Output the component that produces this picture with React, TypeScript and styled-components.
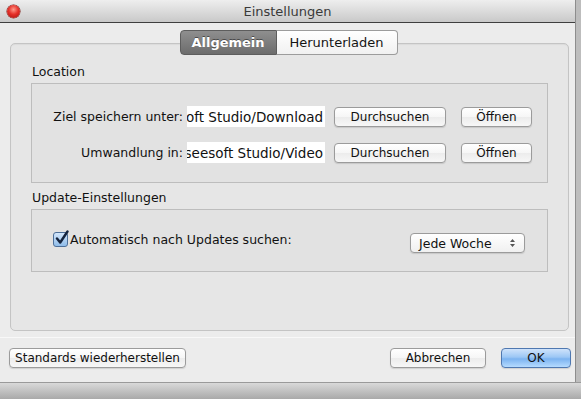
import React from 'react';
import styled, { createGlobalStyle } from 'styled-components';

const GlobalStyle = createGlobalStyle`
  html, body {
    margin: 0;
    padding: 0;
    background: #bdbdbd;
    font-family: "DejaVu Sans", "Liberation Sans", sans-serif;
    font-size: 12.5px;
    color: #111;
  }
`;

const Screen = styled.div`
  width: 581px;
  height: 399px;
  display: flex;
  flex-direction: column;
  overflow: hidden;
`;

const Window = styled.div`
  width: 576px;
  height: 383px;
  background: #ececec;
  border-right: 1px solid #8d8d8d;
  display: flex;
  flex-direction: column;
  box-sizing: border-box;
`;

const BottomStrip = styled.div`
  height: 16px;
  background: linear-gradient(#d9d9d9, #a9a9a9);
  border-top: 1px solid #9a9a9a;
`;

const TitleBar = styled.div`
  height: 22px;
  flex: none;
  background: linear-gradient(#eeeeee, #c9c9c9);
  border-bottom: 1px solid #3f3f3f;
  display: flex;
  align-items: center;
  position: relative;
  padding-left: 7px;
`;

const CloseDot = styled.div`
  width: 13px;
  height: 13px;
  border-radius: 50%;
  background: radial-gradient(circle at 50% 35%, #ff9a8a 0%, #e6312a 45%, #a50f0b 100%);
  box-shadow: 0 0 0 0.5px #7a1a14, 0 1px 1px rgba(255,255,255,0.6);
`;

const Title = styled.div`
  position: absolute;
  left: 0;
  right: 0;
  text-align: center;
  font-size: 13px;
  color: #3a3a3a;
  pointer-events: none;
`;

const Body = styled.div`
  flex: 1;
  display: flex;
  flex-direction: column;
  padding: 7px 6px 0 10px;
`;

const TabRow = styled.div`
  display: flex;
  justify-content: center;
  position: relative;
  z-index: 1;
  margin-bottom: -12px;
  padding-right: 2px;
`;

const Tab = styled.div<{ active?: boolean }>`
  height: 23px;
  display: flex;
  align-items: center;
  justify-content: center;
  font-size: 13px;
  border: 1px solid ${p => (p.active ? '#5d5d5d' : '#9c9c9c')};
  background: ${p => (p.active ? 'linear-gradient(#8f8f8f, #6c6c6c)' : 'linear-gradient(#ffffff, #f1f1f1)')};
  color: ${p => (p.active ? '#ffffff' : '#141414')};
  font-weight: ${p => (p.active ? 'bold' : 'normal')};
  text-shadow: ${p => (p.active ? '0 -1px 0 rgba(0,0,0,0.45)' : 'none')};
  &:first-child {
    border-radius: 4px 0 0 4px;
    width: 95px;
  }
  &:last-child {
    border-radius: 0 4px 4px 0;
    border-left: none;
    width: 120px;
  }
`;

const Panel = styled.div`
  height: 288px;
  box-sizing: border-box;
  border: 1px solid #c4c4c4;
  border-radius: 5px;
  background: #e6e6e6;
  box-shadow: inset 0 1px 1px rgba(0,0,0,0.05);
  padding: 20px 20px 0 20px;
  display: flex;
  flex-direction: column;
`;

const GroupTitle = styled.div`
  margin: 0 0 3px 1px;
  height: 16px;
  line-height: 16px;
`;

const GroupBox = styled.div<{ h: number }>`
  height: ${p => p.h}px;
  box-sizing: border-box;
  border: 1px solid #bdbdbd;
  background: #e2e2e2;
  margin-bottom: 7px;
`;

const PathGrid = styled.div`
  display: grid;
  grid-template-columns: 151px 133px 112px 71px;
  column-gap: 9px;
  row-gap: 15px;
  padding: 22px 0 0 0;
  align-items: center;
  & > *:nth-child(4n + 2) { margin-left: -5px; }
  & > *:nth-child(4n) { margin-left: 6px; }
`;

const Label = styled.div`
  text-align: right;
`;

const PathField = styled.div`
  height: 21px;
  background: #ffffff;
  display: flex;
  justify-content: flex-end;
  align-items: center;
  overflow: hidden;
  white-space: nowrap;
  padding-right: 2px;
  font-size: 13.5px;
`;

const Button = styled.div<{ w: number; primary?: boolean }>`
  width: ${p => p.w}px;
  height: 20px;
  box-sizing: border-box;
  border: 1px solid ${p => (p.primary ? '#4f78b0' : '#9b9b9b')};
  border-radius: 4px;
  background: ${p =>
    p.primary
      ? 'linear-gradient(#cfe3fb 0%, #9cc7f5 45%, #7cb3f0 55%, #b5dbff 100%)'
      : 'linear-gradient(#ffffff 0%, #f6f6f6 50%, #ececec 51%, #f7f7f7 100%)'};
  box-shadow: 0 1px 1px rgba(0,0,0,0.12);
  display: flex;
  align-items: center;
  justify-content: center;
  font-size: 12px;
  white-space: nowrap;
`;

const UpdateRow = styled.div`
  display: flex;
  align-items: flex-start;
  justify-content: space-between;
  padding: 21px 22px 0 21px;
`;

const CheckLabel = styled.label`
  display: flex;
  align-items: center;
  gap: 2px;
  height: 17px;
`;

const Check = styled.span`
  width: 13px;
  height: 13px;
  border: 1px solid #4d6f99;
  border-radius: 3px;
  background: linear-gradient(#d3e6fb, #8fbce9);
  position: relative;
  display: inline-block;
  & svg {
    position: absolute;
    left: 0;
    top: -3px;
  }
`;

const Select = styled.div`
  width: 115px;
  height: 20px;
  margin-top: 2px;
  box-sizing: border-box;
  border: 1px solid #9b9b9b;
  border-radius: 4px;
  background: linear-gradient(#ffffff, #f0f0f0);
  box-shadow: 0 1px 1px rgba(0,0,0,0.12);
  display: flex;
  align-items: center;
  justify-content: space-between;
  padding: 0 8px 0 8px;
  font-size: 12.5px;
`;

const Footer = styled.div`
  flex: 1;
  border-top: 1px solid #f8f8f8;
  margin: 6px -6px 0 -10px;
  padding: 10px 4px 0 9px;
  display: flex;
  align-items: flex-start;
  gap: 15px;
`;

const Spacer = styled.div`
  flex: 1;
`;

const App: React.FC = () => {
  return (
    <>
      <GlobalStyle />
      <Screen>
        <Window>
          <TitleBar>
            <CloseDot />
            <Title>Einstellungen</Title>
          </TitleBar>
          <Body>
            <TabRow>
              <Tab active>Allgemein</Tab>
              <Tab>Herunterladen</Tab>
            </TabRow>
            <Panel>
              <GroupTitle>Location</GroupTitle>
              <GroupBox h={100}>
                <PathGrid>
                  <Label>Ziel speichern unter:</Label>
                  <PathField>Aiseesoft Studio/Download</PathField>
                  <Button w={112}>Durchsuchen</Button>
                  <Button w={71}>Öffnen</Button>
                  <Label>Umwandlung in:</Label>
                  <PathField>Aiseesoft Studio/Video</PathField>
                  <Button w={112}>Durchsuchen</Button>
                  <Button w={71}>Öffnen</Button>
                </PathGrid>
              </GroupBox>
              <GroupTitle>Update-Einstellungen</GroupTitle>
              <GroupBox h={63}>
                <UpdateRow>
                  <CheckLabel>
                    <Check>
                      <svg width="16" height="16" viewBox="0 0 16 16">
                        <path d="M3 8.5 L6.2 12.5 L13.5 1.5" fill="none" stroke="#14233d" strokeWidth="2.4" strokeLinecap="round" strokeLinejoin="round" />
                      </svg>
                    </Check>
                    Automatisch nach Updates suchen:
                  </CheckLabel>
                  <Select>
                    <span>Jede Woche</span>
                    <svg width="7" height="10" viewBox="0 0 7 10">
                      <path d="M1 4 L3.5 1 L6 4 Z M1 6 L3.5 9 L6 6 Z" fill="#555" />
                    </svg>
                  </Select>
                </UpdateRow>
              </GroupBox>
            </Panel>
            <Footer>
              <Button w={177}>Standards wiederherstellen</Button>
              <Spacer />
              <Button w={96}>Abbrechen</Button>
              <Button w={70} primary>OK</Button>
            </Footer>
          </Body>
        </Window>
        <BottomStrip />
      </Screen>
    </>
  );
};

export default App;
